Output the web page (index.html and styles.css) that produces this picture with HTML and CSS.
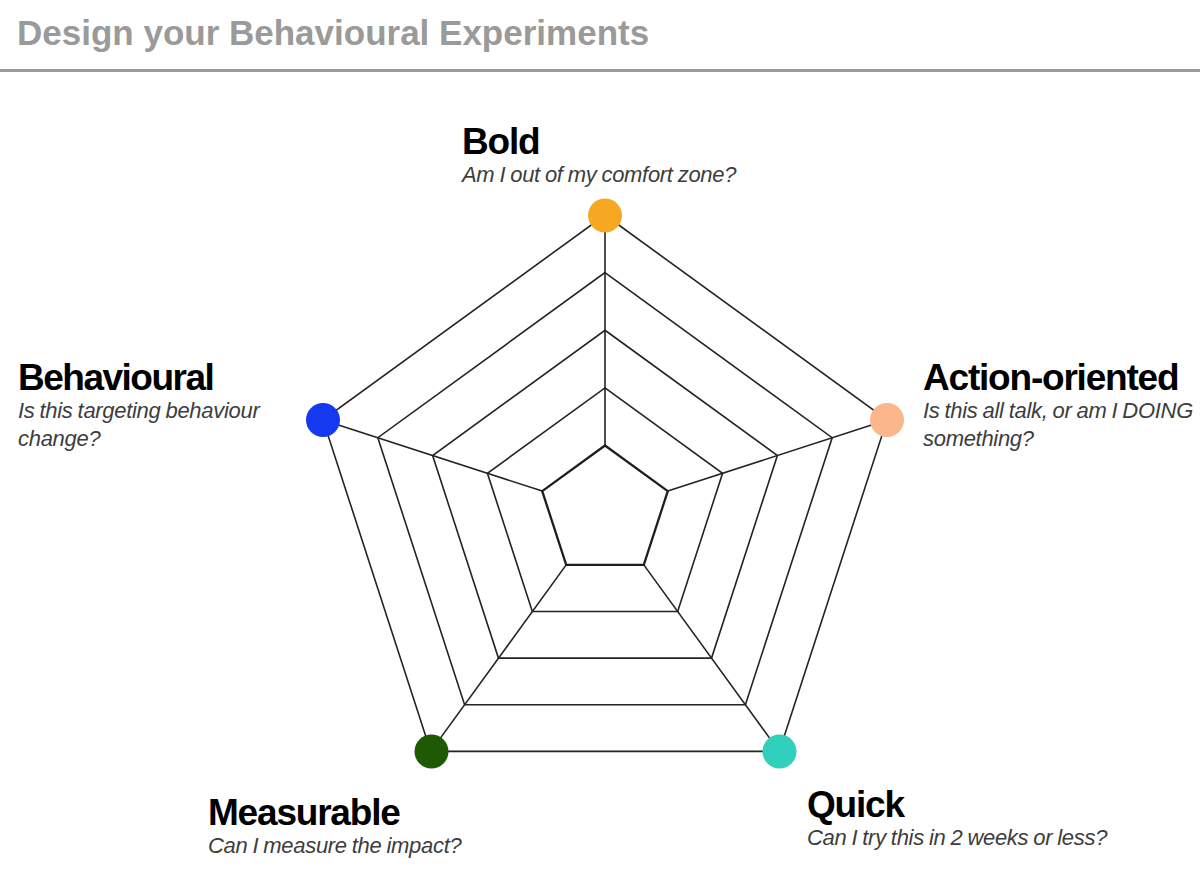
FILE: index.html
```html
<!DOCTYPE html>
<html lang="en">
<head>
<meta charset="utf-8">
<title>Design your Behavioural Experiments</title>
<link rel="stylesheet" href="styles.css">
</head>
<body>
<header class="page-header">
  <h1 class="page-title">Design your Behavioural Experiments</h1>
</header>
<main class="chart">
  <svg class="radar" viewBox="0 72 1200 802" xmlns="http://www.w3.org/2000/svg" aria-hidden="true">
    <g class="grid">
      <polygon points="605,387.9 722.58,473.3 677.67,611.5 532.33,611.5 487.42,473.3"/>
      <polygon points="605,330.25 777.38,455.5 711.54,658.1 498.46,658.1 432.62,455.5"/>
      <polygon points="605,272.6 832.18,437.7 745.41,704.75 464.59,704.75 377.82,437.7"/>
      <polygon points="605,215 886.99,419.9 779.28,751.4 430.72,751.4 323.01,419.9"/>
      <line x1="605" y1="445.5" x2="605" y2="215"/>
      <line x1="667.77" y1="491.1" x2="886.99" y2="419.9"/>
      <line x1="643.79" y1="564.9" x2="779.28" y2="751.4"/>
      <line x1="566.21" y1="564.9" x2="430.72" y2="751.4"/>
      <line x1="542.23" y1="491.1" x2="323.01" y2="419.9"/>
    </g>
    <polygon class="core" points="605,445.5 667.77,491.1 643.79,564.9 566.21,564.9 542.23,491.1"/>
    <circle class="dot dot-bold" cx="605" cy="215.5" r="17"/>
    <circle class="dot dot-action" cx="887" cy="420" r="17"/>
    <circle class="dot dot-quick" cx="779.5" cy="751.5" r="17"/>
    <circle class="dot dot-measurable" cx="431.5" cy="751.5" r="17"/>
    <circle class="dot dot-behavioural" cx="323" cy="420" r="17"/>
  </svg>

  <div class="label label-bold">
    <h2 class="label-title">Bold</h2>
    <p class="label-question">Am I out of my comfort zone?</p>
  </div>
  <div class="label label-behavioural">
    <h2 class="label-title">Behavioural</h2>
    <p class="label-question">Is this targeting behaviour<br>change?</p>
  </div>
  <div class="label label-action">
    <h2 class="label-title">Action-oriented</h2>
    <p class="label-question">Is this all talk, or am I DOING<br>something?</p>
  </div>
  <div class="label label-measurable">
    <h2 class="label-title">Measurable</h2>
    <p class="label-question">Can I measure the impact?</p>
  </div>
  <div class="label label-quick">
    <h2 class="label-title">Quick</h2>
    <p class="label-question">Can I try this in 2 weeks or less?</p>
  </div>
</main>
</body>
</html>
```

FILE: styles.css
```css
* {
  box-sizing: border-box;
}

html, body {
  margin: 0;
  padding: 0;
  background: #ffffff;
}

body {
  width: 1200px;
  height: 874px;
  overflow: hidden;
  font-family: "Liberation Sans", Arial, sans-serif;
  color: #000;
}

.page-header {
  height: 72px;
  padding: 13px 0 0 17px;
  border-bottom: 3px solid #9b9b9b;
}

.page-title {
  margin: 0;
  font-size: 35px;
  line-height: 40px;
  font-weight: 700;
  letter-spacing: 0;
  color: #9a9a9a;
}

.chart {
  position: relative;
  width: 1200px;
  height: 802px;
}

.radar {
  position: absolute;
  left: 0;
  top: 0;
  width: 1200px;
  height: 802px;
}

.grid polygon,
.grid line {
  fill: none;
  stroke: #232323;
  stroke-width: 1.6;
  stroke-linejoin: miter;
}

.core {
  fill: none;
  stroke: #1e1e1e;
  stroke-width: 2.3;
}

.dot-bold { fill: #f6a823; }
.dot-action { fill: #fbb68b; }
.dot-quick { fill: #2fd1bd; }
.dot-measurable { fill: #1d5a02; }
.dot-behavioural { fill: #1539ee; }

.label {
  position: absolute;
}

.label-title {
  margin: 0;
  font-size: 37px;
  line-height: 38px;
  font-weight: 700;
  letter-spacing: -1.2px;
  color: #000;
  white-space: nowrap;
}

.label-question {
  margin: 0;
  font-size: 22px;
  line-height: 28px;
  font-style: italic;
  font-weight: 400;
  letter-spacing: -0.3px;
  word-spacing: -0.8px;
  color: #3d3d3d;
  white-space: nowrap;
}

.label-bold { left: 462px; top: 51px; }
.label-behavioural { left: 18px; top: 287px; }
.label-behavioural .label-title { letter-spacing: -1.5px; }
.label-action { left: 923px; top: 287px; }
.label-measurable { left: 208px; top: 722px; }
.label-quick { left: 807px; top: 714px; }
```
